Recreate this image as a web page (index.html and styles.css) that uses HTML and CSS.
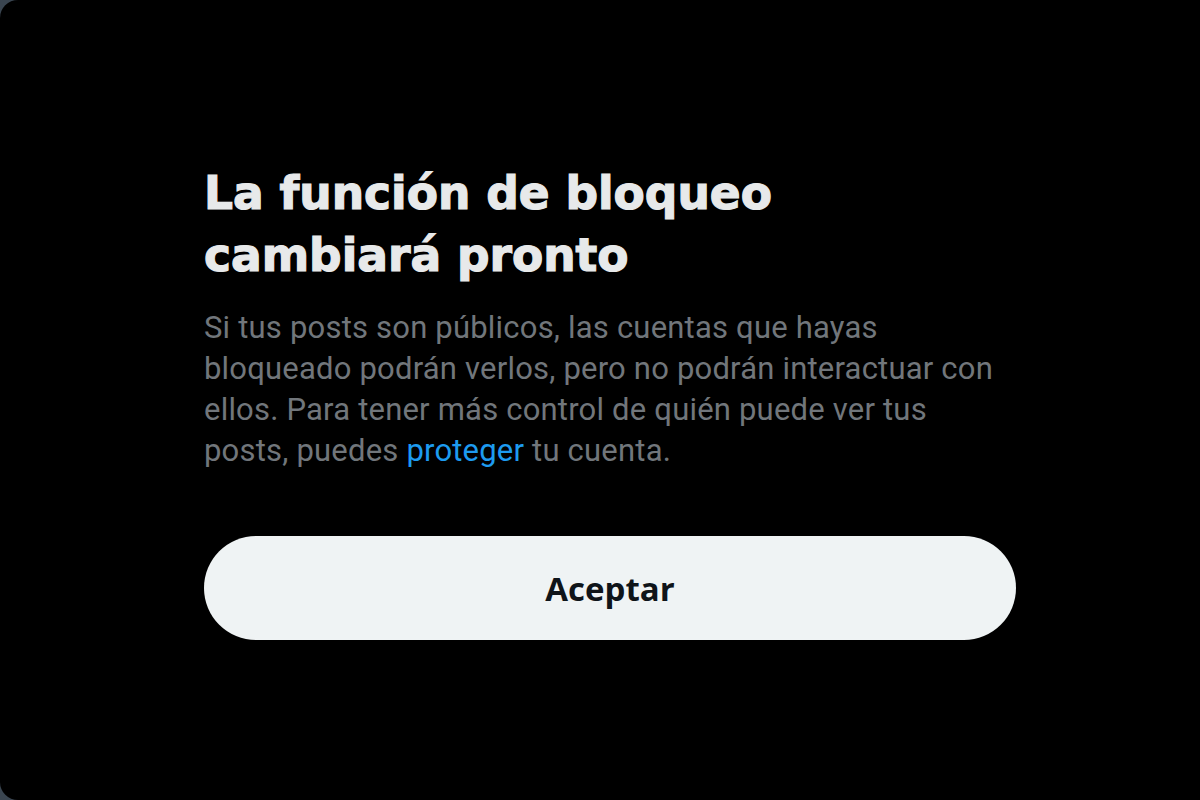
FILE: index.html
```html
<!DOCTYPE html>
<html lang="es">
<head>
<meta charset="utf-8">
<title>La función de bloqueo cambiará pronto</title>
<link rel="stylesheet" href="styles.css">
</head>
<body>
<div class="overlay">
  <div class="modal">
    <div class="content">
      <h1 class="title">La función de bloqueo cambiará pronto</h1>
      <p class="text">Si tus posts son públicos, las cuentas que hayas bloqueado podrán verlos, pero no podrán interactuar con ellos. Para tener más control de quién puede ver tus posts, puedes <a class="link" href="#">proteger</a> tu cuenta.</p>
      <button class="btn" type="button">Aceptar</button>
    </div>
  </div>
</div>
</body>
</html>
```

FILE: styles.css
```css
html, body {
  margin: 0;
  padding: 0;
  width: 1200px;
  height: 800px;
  overflow: hidden;
  background: #3a4550;
}
.overlay {
  width: 1200px;
  height: 800px;
  overflow: hidden;
}
.modal {
  width: 1260px;
  height: 800px;
  background: #000;
  border-radius: 18px;
  display: flex;
  box-sizing: border-box;
  padding: 163px 0 0 204px;
}
.content {
  width: 812px;
  display: flex;
  flex-direction: column;
}
.title {
  margin: 0;
  font-family: "DejaVu Sans", "Noto Sans", sans-serif;
  font-weight: 700;
  font-size: 45.5px;
  line-height: 62px;
  color: #e7e9ea;
  -webkit-text-stroke: 1.2px #e7e9ea;
  letter-spacing: 0;
  max-width: 640px;
}
.text {
  margin: 20px 0 0 0;
  max-width: 805px;
  font-family: Roboto, "Noto Sans", sans-serif;
  font-weight: 400;
  font-size: 31px;
  line-height: 41px;
  letter-spacing: 0.2px;
  color: #71767b;
}
.link {
  color: #1d9bf0;
  text-decoration: none;
}
.btn {
  margin-top: 65px;
  height: 104px;
  width: 812px;
  border: none;
  border-radius: 52px;
  background: #eff3f4;
  color: #0f1419;
  font-family: "Open Sans", "Noto Sans", sans-serif;
  font-weight: 700;
  font-size: 33px;
  padding: 0;
  cursor: pointer;
}
```
